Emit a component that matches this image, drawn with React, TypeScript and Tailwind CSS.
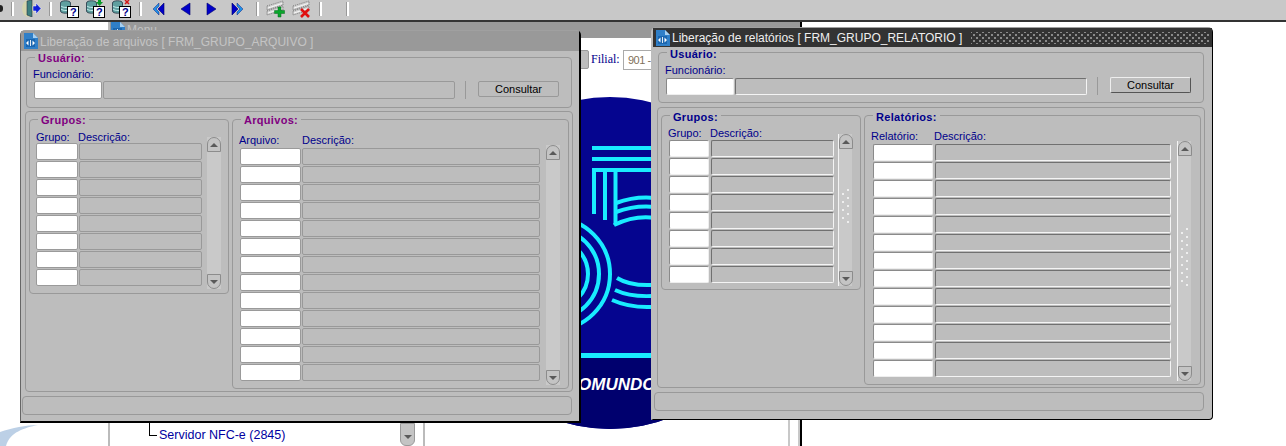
import React from 'react';

const FONT = { fontFamily: '"Liberation Sans", Arial, sans-serif' };

const DocIcon = () => (
  <svg width="14" height="16" viewBox="0 0 14 16" className="shrink-0">
    <path d="M0 0h9l5 5v11H0z" fill="#2f7fc8" />
    <path d="M9 0l5 5H9z" fill="#a8d0f0" />
    <rect x="2" y="6" width="9" height="8" fill="#1a66b0" />
    <path d="M2 10l2.500-2.500v5zM11 10L8.500 7.500v5z" fill="#fff" />
    <rect x="6" y="7" width="1" height="6" fill="#dfeaf5" />
  </svg>
);

const DbIcon = ({ mark }: { mark?: 'arrow' | 'x' }) => (
  <svg width="20" height="18" viewBox="0 0 20 18" className="shrink-0">
    <path d="M0.500 3c0-3 10-3 10 0v8c0 3-10 3-10 0z" fill="#5f9f9f" stroke="#234" strokeWidth="0.8" />
    <path d="M1 6c2 2 8 2 10 0M1 9c2 2 8 2 10 0" stroke="#dff" fill="none" strokeWidth="0.8" />
    <rect x="7.500" y="6.500" width="11" height="11" fill="#fff" stroke="#000" />
    <text x="10" y="16" fontSize="11" fontWeight="700" fill="#00008b" fontFamily="Liberation Sans">?</text>
    {mark === 'arrow' && <path d="M12 0h3v2h2l-3.500 4L10 2h2z" fill="#0a9a2a" />}
    {mark === 'x' && <path d="M13 0l4 4M17 0l-4 4" stroke="#d01818" strokeWidth="1.500" />}
  </svg>
);

const RowIcon = ({ add }: { add?: boolean }) => (
  <svg width="20" height="18" viewBox="0 0 20 18" className="shrink-0">
    <path d="M1 6l16-5v4L1 10zM1 11l16-5v4L1 15z" fill="#d0d0d0" stroke="#555" strokeWidth="0.7" strokeDasharray="1 1" />
    <path d="M2 8l14-4.500M2 13l14-4.500" stroke="#fff" strokeWidth="0.8" />
    {add ? (
      <path d="M12 7h3v3.500h3.500v3H15V17h-3v-3.500H8.500v-3H12z" fill="#0aa52c" stroke="#066b1c" strokeWidth="0.5" />
    ) : (
      <path d="M9 9l8 8M17 9l-8 8" stroke="#e01010" strokeWidth="2.600" />
    )}
  </svg>
);

const Sep = () => <span className="block w-[3px] h-[14px] bg-white border-l border-[#999] shrink-0" />;

const NavArrow = ({ dir, double }: { dir: 'l' | 'r'; double?: boolean }) => (
  <svg width="14" height="14" viewBox="0 0 14 14" className="shrink-0">
    {dir === 'l' ? (
      double ? (
        <>
          <path d="M12 1L6 7l6 6z" fill="#0000c8" stroke="#00006b" strokeWidth="0.6" />
          <path d="M7 1L1 7l6 6V10L4 7l3-3z" fill="#1e90e8" stroke="#00006b" strokeWidth="0.4" />
        </>
      ) : (
        <path d="M11 1L2 7l9 6z" fill="#0000c8" stroke="#00006b" strokeWidth="0.6" />
      )
    ) : double ? (
      <>
        <path d="M2 1l6 6-6 6z" fill="#0000c8" stroke="#00006b" strokeWidth="0.6" />
        <path d="M7 1l6 6-6 6V10l3-3-3-3z" fill="#1e90e8" stroke="#00006b" strokeWidth="0.4" />
      </>
    ) : (
      <path d="M2 1l9 6-9 6z" fill="#0000c8" stroke="#00006b" strokeWidth="0.6" />
    )}
  </svg>
);

const Toolbar = () => (
  <div className="h-[20px] pb-[3px] bg-[#c8c8c8] flex items-center overflow-hidden">
    <span className="w-[3px] h-[7px] bg-[#222] rounded-r-sm shrink-0" />
    <span className="ml-[8px]"><Sep /></span>
    <svg width="20" height="17" viewBox="0 0 20 17" className="ml-[8px] shrink-0">
      <ellipse cx="6" cy="8.500" rx="6" ry="8.500" fill="#d4d4ae" />
      <path d="M5 1l5-1v17l-5-2z" fill="#3c7f7f" stroke="#234" strokeWidth="0.6" />
      <path d="M11 6h3V3l5 5.500-5 5.500v-3h-3z" fill="#1020d8" stroke="#fff" strokeWidth="0.5" />
    </svg>
    <span className="ml-[7px]"><Sep /></span>
    <span className="ml-[8px]"><DbIcon /></span>
    <span className="ml-[6px]"><DbIcon mark="arrow" /></span>
    <span className="ml-[6px]"><DbIcon mark="x" /></span>
    <span className="ml-[7px]"><Sep /></span>
    <span className="ml-[10px]"><NavArrow dir="l" double /></span>
    <span className="ml-[13px]"><NavArrow dir="l" /></span>
    <span className="ml-[12px]"><NavArrow dir="r" /></span>
    <span className="ml-[11px]"><NavArrow dir="r" double /></span>
    <span className="ml-[12px]"><Sep /></span>
    <span className="ml-[7px]"><RowIcon add /></span>
    <span className="ml-[6px]"><RowIcon /></span>
    <span className="ml-[7px]"><Sep /></span>
    <span className="ml-[24px]"><Sep /></span>
  </div>
);

const Group = ({
  title,
  color,
  className,
  children,
}: {
  title: string;
  color: string;
  className: string;
  children: React.ReactNode;
}) => (
  <div className={`absolute border border-[#999] rounded-[4px] ${className}`}>
    <span className={`absolute left-[8px] bg-[#bdbdbd] px-[3px] text-[11px] leading-[14px] font-bold tracking-[0.3px] ${color}`}>
      {title}
    </span>
    {children}
  </div>
);

const Scroll = ({ dots, height }: { dots: number; height: string }) => (
  <div className={`w-[14px] flex flex-col items-center bg-[#c9c9c9] relative ${dots > 0 ? 'border-l border-[#f4f4f4]' : ''} ${height}`}>
    <div className="w-[14px] h-[15px] shrink-0 bg-[#c4c4c4] border border-[#8c8c8c] rounded-t-[7px] flex items-center justify-center">
      <span className="border-x-[4px] border-x-transparent border-b-[4px] border-b-[#5a5a5a]" />
    </div>
    <div className="flex-1 flex items-center justify-center gap-[3px] pb-[8px]">
      {dots > 0 && (
        <>
          <div className="flex flex-col gap-[6px]">
            {Array.from({ length: dots - 1 }).map((_, i) => (
              <span key={i} className="block w-[2px] h-[2px] bg-[#eee]" />
            ))}
          </div>
          <div className="flex flex-col gap-[6px]">
            {Array.from({ length: dots }).map((_, i) => (
              <span key={i} className="block w-[2px] h-[2px] bg-[#eee]" />
            ))}
          </div>
        </>
      )}
    </div>
    <div className="w-[14px] h-[15px] shrink-0 bg-[#c4c4c4] border border-[#8c8c8c] rounded-b-[7px] flex items-center justify-center">
      <span className="border-x-[4px] border-x-transparent border-t-[4px] border-t-[#5a5a5a]" />
    </div>
  </div>
);

const Rows = ({
  count,
  codeW,
  descW,
  active,
}: {
  count: number;
  codeW: string;
  descW: string;
  active?: boolean;
}) => (
  <div className={`flex flex-col gap-[1px] ${active ? 'ml-[1px]' : ''}`}>
    {Array.from({ length: count }).map((_, i) => (
      <div key={i} className={`flex h-[17px] ${active ? 'gap-[2px]' : 'gap-[1px]'}`}>
        <div className={`${codeW} bg-white rounded-[2px] border ${active ? 'border-[#8a8a8a] border-b-[#eee] border-r-[#eee]' : 'border-[#9a9a9a]'}`} />
        <div className={`${descW} bg-[#bdbdbd] rounded-[2px] border ${active ? 'border-[#707070] border-b-[#f4f4f4] border-r-[#f4f4f4]' : 'border-[#999]'}`} />
      </div>
    ))}
  </div>
);

const FormWindow = ({
  active,
  title,
  filesLabel,
  fileCol,
  className,
}: {
  active?: boolean;
  title: string;
  filesLabel: string;
  fileCol: string;
  className: string;
}) => {
  const heading = active ? '-top-[6px] text-[#00008b]' : '-top-[7px] text-[#800080]';
  return (
    <div
      className={`absolute bg-[#bdbdbd] border-t border-t-[#a0a0a0] rounded-t-[5px] ${
        active ? 'border-l-2 border-l-[#bdbdbd] border-r border-b border-r-black border-b-black rounded-br-[4px]' : 'border-l border-l-[#666] border-r-2 border-b-2 border-r-black border-b-black'
      } ${className}`}
      style={FONT}
    >
      <div className={`flex items-center gap-[2px] pl-[3px] ${active ? 'h-[19px] bg-[#333]' : 'h-[20px] bg-[#999]'}`}>
        <DocIcon />
        <span className={`text-[12px] leading-none ${active ? 'text-[#efefef]' : 'pt-[1px] text-[#c4c4c4]'}`}>{title}</span>
        {active && (
          <div className="flex-1 ml-[7px] mr-[2px] h-[12px] [background-image:radial-gradient(#8a8a8a_1px,transparent_1px),radial-gradient(#8a8a8a_1px,transparent_1px)] [background-size:6px_6px] [background-position:0_0,3px_3px]" />
        )}
      </div>
      <div className="relative">
        {/* Usuario */}
        <Group title="Usuário:" color={heading} className={`left-[5px] h-[51px] ${active ? 'top-[5px] right-[8px]' : 'top-[6px] right-[7px]'}`}>
          <div className={`absolute left-[6px] text-[11px] leading-[12px] text-[#00008b] ${active ? 'top-[11px]' : 'top-[10px]'}`}>Funcionário:</div>
          <div className={`absolute left-[7px] flex gap-[1px] ${active ? 'top-[25px] h-[17px]' : 'top-[23px] h-[18px]'}`}>
            <div className={`w-[68px] bg-white rounded-[2px] border ${active ? 'border-[#888] border-b-[#eee] border-r-[#eee]' : 'border-[#9a9a9a]'}`} />
            <div className={`w-[352px] bg-[#bdbdbd] rounded-[2px] border ${active ? 'border-[#707070] border-b-[#f4f4f4] border-r-[#f4f4f4]' : 'border-[#999]'}`} />
          </div>
          <div className={`absolute left-[438px] w-[1px] h-[18px] bg-[#999] ${active ? 'top-[24px]' : 'top-[23px]'}`} />
          <div className={`absolute left-[451px] w-[81px] h-[16px] rounded-[2px] border text-[11px] leading-[15px] text-center text-black ${active ? 'top-[24px] border-[#eee] border-b-[#555] border-r-[#555]' : 'top-[23px] border-[#999]'}`}>
            Consultar
          </div>
        </Group>

        {/* Outer frame */}
        <div className={`absolute left-[4px] top-[60px] h-[281px] border border-[#999] rounded-[4px] ${active ? 'right-[7px]' : 'right-[6px]'}`} />

        <Group title="Grupos:" color={heading} className="left-[8px] top-[68px] w-[200px] h-[175px]">
          <div className="absolute left-[6px] top-[11px] flex text-[11px] leading-[12px] text-[#00008b]">
            <span className="w-[42px]">Grupo:</span>
            <span>Descrição:</span>
          </div>
          <div className={`absolute left-[6px] ${active ? 'top-[24px]' : 'top-[23px]'}`}>
            <Rows count={8} codeW={active ? 'w-[40px]' : 'w-[42px]'} descW="w-[123px]" active={active} />
          </div>
          <div className={`absolute ${active ? 'left-[176px] top-[18px]' : 'left-[177px] top-[17px]'}`}>
            <Scroll dots={active ? 5 : 0} height="h-[152px]" />
          </div>
        </Group>

        <Group title={filesLabel} color={heading} className="left-[211px] top-[68px] w-[337px] h-[270px]">
          <div className="absolute left-[6px] top-[14px] flex text-[11px] leading-[12px] text-[#00008b]">
            <span className="w-[63px]">{fileCol}</span>
            <span>Descrição:</span>
          </div>
          <div className="absolute left-[7px] top-[28px]">
            <Rows count={13} codeW={active ? 'w-[60px]' : 'w-[61px]'} descW={active ? 'w-[236px]' : 'w-[238px]'} active={active} />
          </div>
          <div className={`absolute top-[25px] ${active ? 'left-[312px]' : 'left-[313px]'}`}>
            <Scroll dots={active ? 8 : 0} height="h-[240px]" />
          </div>
        </Group>

        {/* Status bar */}
        <div className={`absolute left-[1px] top-[345px] h-[19px] border border-[#999] rounded-[4px] ${active ? 'right-[8px]' : 'right-[7px]'}`} />
      </div>
    </div>
  );
};

const Logo = () => (
  <svg width="340" height="340" viewBox="0 0 340 340" className="absolute left-[440px] top-[93px]">
    <defs>
      <clipPath id="disc">
        <circle cx="170" cy="170" r="166" />
      </clipPath>
    </defs>
    <g clipPath="url(#disc)">
      <rect width="340" height="340" fill="#05058f" />
      <rect y="265" width="340" height="75" fill="#00006e" />
      <g fill="none" stroke="#19ecff" strokeWidth="4">
        <path d="M152 55h110M152 66h110M152 77h110" />
        <path d="M154 77v44M165 77v50M175.500 77v55" />
        <path d="M176 110Q195 103 215 105M176 119Q195 112 215 114M174 132Q195 122 215 125" />
        <circle cx="114" cy="181" r="34" />
        <circle cx="114" cy="181" r="45" />
        <circle cx="114" cy="181" r="56" />
        <path d="M177 185Q190 193 212 192M175 197Q190 204 212 203M172 207Q190 215 212 214" />
      </g>
      <rect y="260" width="340" height="5" fill="#19ecff" />
      <text x="138" y="297" fontSize="17" fontWeight="700" fontStyle="italic" fill="#fff" fontFamily="Liberation Sans">
        OMUNDO
      </text>
    </g>
  </svg>
);

const App = () => (
  <div className="relative w-[1286px] h-[446px] bg-white overflow-hidden" style={FONT}>
    <Toolbar />
    <div className="h-[2px] bg-[#333]" />

    {/* Menu window behind the forms */}
    <div className="absolute left-[108px] top-[22px] w-[694px] h-[424px] bg-white border-l-2 border-[#bbb]">
      <div className="h-[16px] bg-[#999] flex items-center gap-[2px] pl-[1px]">
        <DocIcon />
        <span className="text-[12px] text-[#c4c4c4]">Menu</span>
      </div>
      <div className="absolute right-0 top-0 bottom-0 w-[2px] bg-black" />
      <div className="absolute right-[2px] top-[16px] bottom-0 w-[12px] bg-white border-x-2 border-[#c8c8c8]" />
    </div>

    {/* Bottom left swoosh from wallpaper */}
    <svg width="40" height="24" viewBox="0 0 40 24" className="absolute left-0 top-[422px]">
      <path d="M0 10C12 6 26 3 38 3 24 6 10 10 6 24H0z" fill="#bcd0e6" />
    </svg>

    <Logo />

    <div className="absolute left-[580px] top-[50px] w-[9px] h-[19px] bg-[#bdbdbd] border border-[#999] rounded-r-[2px]" />
    <div className="absolute left-[591px] top-[52px] text-[12px] leading-[14px] text-[#00008b]" style={{ fontFamily: '"Liberation Serif", serif' }}>
      Filial:
    </div>
    <div className="absolute left-[623px] top-[50px] w-[40px] h-[20px] border border-[#aaa] pl-[4px] text-[11px] tracking-[-0.5px] leading-[19px] text-[#80705a]">
      901 -
    </div>

    {/* Tree fragment under the first form */}
    <div className="absolute left-[149px] top-[423px] w-[8px] h-[13px] border-l border-b border-black" />
    <div className="absolute left-[159px] top-[428px] text-[12.500px] leading-[14px] text-[#0000a0]">Servidor NFC-e (2845)</div>
    <div className="absolute left-[400px] top-[423px] w-[15px] h-[23px] bg-[#c4c4c4] border border-[#999] rounded-b-[6px] flex items-end justify-center pb-[6px]">
      <span className="border-x-[4px] border-x-transparent border-t-[4px] border-t-[#5a5a5a]" />
    </div>
    <div className="absolute left-[423px] top-[423px] w-[2px] h-[23px] bg-[#bbb]" />

    <FormWindow
      title="Liberação de arquivos [ FRM_GRUPO_ARQUIVO ]"
      filesLabel="Arquivos:"
      fileCol="Arquivo:"
      className="left-[20px] top-[30px] w-[561px] h-[393px]"
    />
    <FormWindow
      active
      title="Liberação de relatórios [ FRM_GRUPO_RELATORIO ]"
      filesLabel="Relatórios:"
      fileCol="Relatório:"
      className="left-[651px] top-[27px] w-[562px] h-[393px]"
    />
  </div>
);

export default App;
